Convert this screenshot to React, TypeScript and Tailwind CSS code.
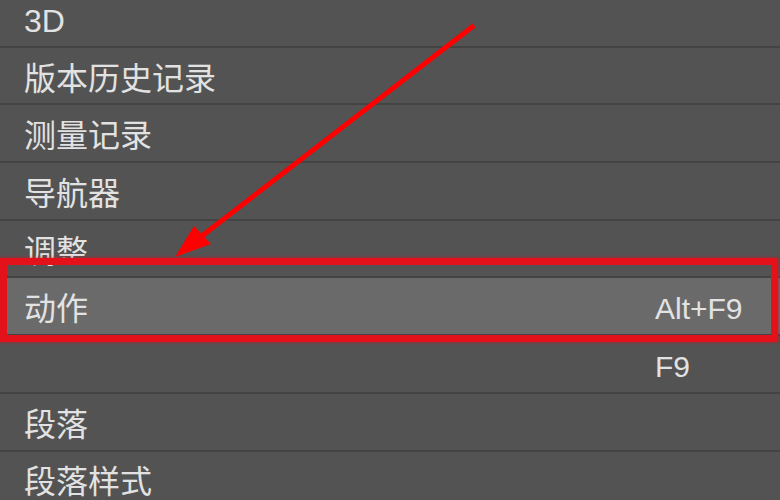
import React from "react";

type MenuRow = {
  label: string;
  shortcut?: string;
  active?: boolean;
};

const rows: MenuRow[] = [
  { label: "3D" },
  { label: "版本历史记录" },
  { label: "测量记录" },
  { label: "导航器" },
  { label: "调整" },
  { label: "动作", shortcut: "Alt+F9", active: true },
  { label: "", shortcut: "F9" },
  { label: "段落" },
  { label: "段落样式" },
];

const Row: React.FC<{ row: MenuRow }> = ({ row }) => (
  <div
    className={
      "flex h-[57.7px] items-center border-b-2 border-[#434343] " +
      (row.active ? "bg-[#6a6a6a]" : "bg-[#535353]")
    }
  >
    <div className="flex-1 pt-[6px] pl-[24px] text-[32px] leading-none text-[#e2e2e2]">{row.label}</div>
    <div className="w-[125px] shrink-0 pt-[6px] text-[30px] leading-none text-[#e2e2e2]">{row.shortcut}</div>
  </div>
);

export default function App() {
  return (
    <div
      className="relative h-[500px] w-[780px] overflow-hidden bg-[#535353]"
      style={{ fontFamily: '"Liberation Sans", "Noto Sans CJK SC", sans-serif' }}
    >
      <div className="-mt-[10px]">
        {rows.map((row, i) => (
          <Row key={i} row={row} />
        ))}
      </div>

      {/* highlight frame round the 动作 row */}
      <div className="absolute left-0 top-[258px] h-[84px] w-[778px] border-[7px] border-[#e3121a] shadow-[0_0_3px_rgba(227,18,26,0.8)]" />

      {/* pointer arrow */}
      <svg className="absolute left-0 top-0" width="780" height="500" viewBox="0 0 780 500">
        <line x1="472" y1="27" x2="198" y2="239" stroke="#ff0000" strokeWidth="5" strokeLinecap="square" />
        <polygon points="175,257 194,226 211,244" fill="#ff0000" />
      </svg>
    </div>
  );
}
